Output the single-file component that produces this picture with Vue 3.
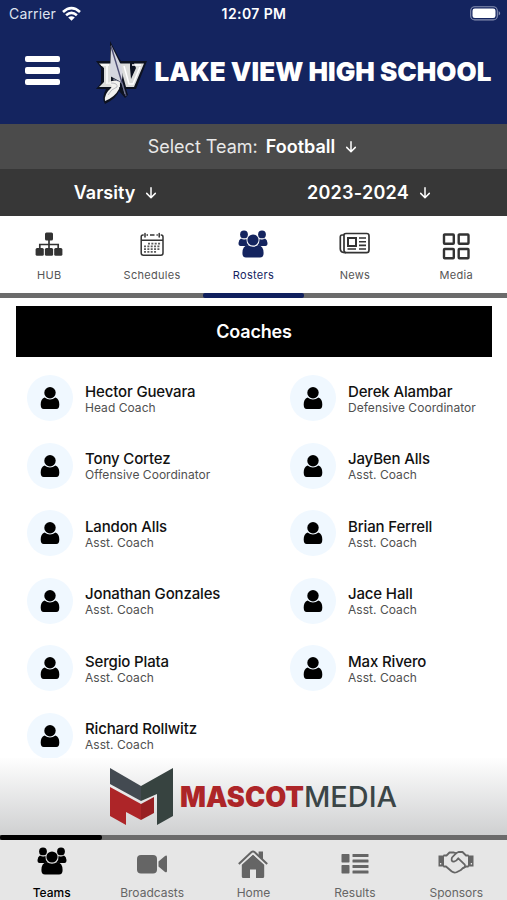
<script setup>
const tabs = [
  { label: 'HUB', icon: 'hub' },
  { label: 'Schedules', icon: 'calendar' },
  { label: 'Rosters', icon: 'people', active: true },
  { label: 'News', icon: 'news' },
  { label: 'Media', icon: 'grid' },
]
const coaches = [
  ['Hector Guevara', 'Head Coach'],
  ['Derek Alambar', 'Defensive Coordinator'],
  ['Tony Cortez', 'Offensive Coordinator'],
  ['JayBen Alls', 'Asst. Coach'],
  ['Landon Alls', 'Asst. Coach'],
  ['Brian Ferrell', 'Asst. Coach'],
  ['Jonathan Gonzales', 'Asst. Coach'],
  ['Jace Hall', 'Asst. Coach'],
  ['Sergio Plata', 'Asst. Coach'],
  ['Max Rivero', 'Asst. Coach'],
  ['Richard Rollwitz', 'Asst. Coach'],
]
const nav = [
  { label: 'Teams', icon: 'people', active: true },
  { label: 'Broadcasts', icon: 'video' },
  { label: 'Home', icon: 'home' },
  { label: 'Results', icon: 'list' },
  { label: 'Sponsors', icon: 'shake' },
]
</script>

<template>
  <svg class="defs" aria-hidden="true">
    <defs>
      <symbol id="people" viewBox="0 0 30 28">
        <g fill="currentColor">
          <circle cx="6" cy="4.4" r="3.9" /><circle cx="24" cy="4.4" r="3.9" />
          <path d="M3 8.5Q6 10.5 8.4 8.7Q8.2 13 10.6 15.2Q9 16 7.5 16H2.6Q.4 16 .5 13Q.7 9.8 3 8.5ZM27 8.5Q24 10.5 21.6 8.7Q21.8 13 19.4 15.2Q21 16 22.5 16H27.4Q29.6 16 29.5 13Q29.3 9.8 27 8.5Z" />
          <circle cx="15" cy="10" r="5.6" />
          <path d="M9.700 15Q15 18.400 20.300 15Q25.600 16 25.600 23Q25.600 27.500 22 27.500H8Q4.400 27.500 4.400 23Q4.400 16 9.700 15Z" />
        </g>
      </symbol>
      <symbol id="hub" viewBox="0 0 30 28">
        <g fill="currentColor">
          <rect x="11" y="2.500" width="8" height="8" rx="1.500" />
          <rect x="1.600" y="18" width="8.200" height="7.800" rx="1.500" />
          <rect x="10.900" y="18" width="8.200" height="7.800" rx="1.500" />
          <rect x="20.200" y="18" width="8.200" height="7.800" rx="1.500" />
        </g>
        <path d="M15 9v10M5.800 19v-4.500h18.400v4.500" fill="none" stroke="currentColor" stroke-width="1.700" />
      </symbol>
      <symbol id="calendar" viewBox="0 0 30 28">
        <g fill="none" stroke="currentColor" stroke-width="1.500">
          <path d="M6.700 5H6Q4.200 5 4.200 7V23Q4.200 25.200 6.300 25.200H24Q26 25.200 26 23V7Q26 5 24.200 5H23.700M9.500 5h1.500M13 5h4.500M19.500 5h1.300M4.200 10.300H26" />
          <path d="M8 3.500v3.500M22.200 3.500v3.500" stroke-linecap="round" />
          <path d="M11 13.700H23.500M7 16.400H23.500M7 19.100H23.500M7 21.800H20" stroke-width="1.700" stroke-dasharray="2 1.350" opacity=".8" />
        </g>
      </symbol>
      <symbol id="news" viewBox="0 0 32 28">
        <g fill="none" stroke="currentColor" stroke-width="1.700">
          <path d="M5 5V20.500Q5 22.700 7 22.700H27.500Q30 22.700 30 20V5.800Q30 3.500 27.700 3.500H7Q5 3.500 5 5Z" />
          <path d="M5 5H3Q1.300 5 1.300 7V19Q1.300 22.700 7 22.700" />
          <rect x="9" y="8" width="8" height="8" stroke-width="2" />
          <path d="M20 8h7M20 11.700h7M20 15.400h7M8.500 19h8.500M20 19h7" stroke-width="1.600" />
        </g>
      </symbol>
      <symbol id="grid" viewBox="0 0 30 32">
        <g fill="none" stroke="currentColor" stroke-width="2.400">
          <rect x="3" y="4.500" width="9.800" height="9.300" rx=".7" /><rect x="17.700" y="4.500" width="9.800" height="9.300" rx=".7" />
          <rect x="3" y="19" width="9.800" height="9.300" rx=".7" /><rect x="17.700" y="19" width="9.800" height="9.300" rx=".7" />
        </g>
      </symbol>
      <symbol id="video" viewBox="0 0 30 28">
        <rect x="0" y="8" width="20" height="18.400" rx="4" fill="currentColor" />
        <path d="M21.500 14.500L28 9Q30 7.700 30 10V24Q30 26 28 25L21.500 19.500Z" fill="currentColor" />
      </symbol>
      <symbol id="home" viewBox="0 0 30 32">
        <path d="M3.800 17.700L15 7.500L26.200 17.700V29.500Q26.200 31 24.700 31H18V22.500H12V31H5.300Q3.800 31 3.800 29.500Z" fill="currentColor" />
        <path d="M20.600 4.500H25V13L20.600 9Z" fill="currentColor" />
        <path d="M1.800 18.300L15 6.400L28.200 18.300" fill="none" stroke="#e6e6e6" stroke-width="1.300" />
        <path d="M.8 17L13.500 5Q15 3.900 16.500 5L29.200 17" fill="none" stroke="currentColor" stroke-width="2" />
      </symbol>
      <symbol id="list" viewBox="0 0 30 28">
        <g fill="currentColor">
          <rect x="1.500" y="7" width="8" height="8.500" rx=".7" /><rect x="1.500" y="18" width="8" height="8.500" rx=".7" />
          <rect x="12.500" y="7" width="16" height="3" rx=".5" /><rect x="12.500" y="12.500" width="16" height="3" rx=".5" />
          <rect x="12.500" y="18" width="16" height="3" rx=".5" /><rect x="12.500" y="23.500" width="16" height="3" rx=".5" />
        </g>
      </symbol>
      <symbol id="shake" viewBox="0 0 36 28">
        <path d="M.5 8.500H6V19.500H.5ZM30 8.500h5.500v11H30Z" fill="currentColor" />
        <path d="M2.600 16v1.500M33.400 16v1.500" stroke="#e6e6e6" stroke-width="1.300" />
        <g fill="none" stroke="currentColor" stroke-width="1.800" stroke-linecap="round" stroke-linejoin="round">
          <path d="M6 8.500H8.500L11.500 5.500H16L18 6.300L20.500 5H24.500L28 8.500H30M6 19.500H8L13.500 24.300Q16 26.300 18.500 25.200L22.500 23.300L25 21L28.300 19.500H30" />
          <path d="M18 6.300L14 10.500Q12.500 14.800 16 14.700Q18.400 14.300 20.300 11.300L26.500 17.300Q28 19.200 25.500 21" />
        </g>
      </symbol>
      <symbol id="arrow" viewBox="0 0 12 13">
        <path d="M6 1.700V11.500M1.700 7.400L6 11.700L10.300 7.400" fill="none" stroke="currentColor" stroke-width="1.500" stroke-linecap="round" stroke-linejoin="round" />
      </symbol>
      <symbol id="person" viewBox="0 0 20 24">
        <circle cx="10" cy="6.700" r="5.700" />
        <path d="M4.500 11.600Q10 15.300 15.500 11.600Q19.300 13 19.300 18.500Q19.300 23 16.300 23H3.700Q.7 23 .7 18.500Q.7 13 4.500 11.600Z" />
      </symbol>
    </defs>
  </svg>

  <div class="screen">
    <header class="top">
      <div class="status">
        <div class="carrier">
          <span>Carrier</span>
          <svg class="wifi" viewBox="0 0 19 14" fill="none" stroke="#fff" stroke-width="2.600">
            <path d="M1 5Q9.500 -2.800 18 5M4.100 8.300Q9.500 3.500 14.900 8.300" />
            <path d="M9.500 13.700L6.200 10.500Q9.500 7.800 12.800 10.500Z" fill="#fff" stroke="none" />
          </svg>
        </div>
        <span class="clock">12:07 PM</span>
        <svg class="battery" viewBox="0 0 31 15">
          <rect x=".7" y=".7" width="26.600" height="13.200" rx="4" fill="none" stroke="#8790b2" stroke-width="1.100" />
          <rect x="2.500" y="2.500" width="23" height="9.600" rx="2.300" fill="#fff" />
          <path d="M28.700 5q3 2.300 0 4.600z" fill="#8790b2" />
        </svg>
      </div>
      <div class="brand">
        <div class="menu"><i /><i /><i /></div>
        <svg class="crest" viewBox="0 0 52 64">
          <path d="M14 0L23 17L25 20H51L40 48H30L32 54L29 57L23 50Q21 57 9 63Q5 57 10 48H0L5 42V27L0 20H14Z" fill="#0d1220" />
          <path d="M3 22.500H15V42H24V46H3L8 41V27ZM23 22.500H34V27L35 38L40 27L38 22.500H48L38 46H30L25 28Z" fill="#dcdddb" />
          <path d="M5 24H13M11 25V43M28 25L33 43H37L44 26M36 24H45" fill="none" stroke="#fff" stroke-width="1.500" />
          <path d="M15 4L25 24Q28 35 25 41L14 35Z" fill="#d5d6df" />
          <path d="M15 5L30 55" fill="none" stroke="#4e4e73" stroke-width="1.400" />
          <path d="M17 38L26 42L29 53" fill="none" stroke="#777d93" stroke-width="1" />
          <path d="M24 41Q17 37 10 43Q18 43 15 47Q8 53 9 60Q19 56 23 48Z" fill="#f1f1ef" />
          <path d="M15 42Q22 42 21 46Q15 48 12 54" fill="none" stroke="#a9acb5" stroke-width=".8" />
        </svg>
        <h1>LAKE VIEW HIGH SCHOOL</h1>
      </div>
    </header>

    <div class="team">
      <span class="lead">Select Team:</span><b>Football</b>
      <svg class="arrow"><use href="#arrow" /></svg>
    </div>
    <div class="filters">
      <div class="level"><b>Varsity</b><svg class="arrow"><use href="#arrow" /></svg></div>
      <div class="year"><b>2023-2024</b><svg class="arrow"><use href="#arrow" /></svg></div>
    </div>

    <nav class="tabs">
      <div v-for="t in tabs" :key="t.label" class="tab" :class="{ active: t.active }">
        <svg :class="t.icon"><use :href="'#' + t.icon" /></svg>
        <span>{{ t.label }}</span>
      </div>
    </nav>
    <div class="rail"><i /></div>

    <main>
      <h2>Coaches</h2>
      <div class="coaches">
        <div v-for="[name, role] in coaches" :key="name" class="coach">
          <div class="avatar"><svg><use href="#person" /></svg></div>
          <div class="info">
            <div class="name">{{ name }}</div>
            <div class="role">{{ role }}</div>
          </div>
        </div>
      </div>
    </main>

    <div class="sponsor">
      <svg viewBox="0 0 290 60">
        <path d="M1 1L32 19V34L1 17Z" fill="#434a51" />
        <path d="M32 19L64 1V49L48 58V27L32 34Z" fill="#374340" />
        <path d="M1 20L32 37V53L17 45V58L1 49Z" fill="#ad2528" />
        <path d="M32 37L45 30V46L32 53Z" fill="#981f22" />
        <text x="71" y="39.500" class="mascot" textLength="124" lengthAdjust="spacingAndGlyphs">MASCOT</text>
        <text x="195" y="39.500" class="media" textLength="93" lengthAdjust="spacingAndGlyphs">MEDIA</text>
      </svg>
    </div>
    <div class="rail bottom"><i /></div>
    <nav class="nav">
      <div v-for="n in nav" :key="n.label" class="item" :class="{ active: n.active }">
        <svg :class="n.icon"><use :href="'#' + n.icon" /></svg>
        <span>{{ n.label }}</span>
      </div>
    </nav>
  </div>
</template>

<style>
body { margin: 0; background: #fff; }
</style>
<style scoped>
* { box-sizing: border-box; }
svg { display: block; overflow: visible; }
.defs { position: absolute; width: 0; height: 0; }
.screen { width: 507px; height: 900px; display: flex; flex-direction: column; overflow: hidden; font-family: Inter, "Liberation Sans", sans-serif; background: #fff; white-space: nowrap; }
.top { height: 124px; flex: none; background: #14245f; color: #fff; }
.status { height: 27px; display: grid; grid-template-columns: 1fr auto 1fr; align-items: center; padding: 0 6px 0 9px; }
.carrier { display: flex; align-items: center; gap: 6px; font-size: 14px; letter-spacing: .15px; color: #dfe3ef; }
.wifi { width: 19px; height: 14px; }
.clock { font-size: 14px; font-weight: 600; letter-spacing: .4px; margin-left: -2px; }
.battery { width: 31px; height: 15px; justify-self: end; }
.brand { height: 90px; display: flex; align-items: center; padding-left: 25px; }
.menu { width: 35px; display: flex; flex-direction: column; gap: 5px; margin-top: -3px; }
.menu i { height: 6.500px; border-radius: 2px; background: #fff; }
.crest { width: 52px; height: 64px; margin-left: 36px; margin-top: 2px; }
h1 { margin: 0 0 0 6.500px; font-size: 26px; line-height: 30px; font-weight: 900; letter-spacing: .03px; width: 338px; }
.team, .level, .year { display: flex; align-items: center; color: #fff; font-size: 18px; }
.team { height: 45px; flex: none; justify-content: center; padding-right: 2px; background: #4b4b4b; }
.lead { color: #e8e8e8; margin-right: 8px; }
b { font-weight: 600; }
.arrow { width: 12px; height: 13px; margin-left: 10px; }
.filters { height: 47px; flex: none; display: grid; grid-template-columns: 231px 1fr; background: #373737; }
.level, .year { justify-content: center; }
.year b { letter-spacing: .25px; }
.tabs { height: 77px; flex: none; display: grid; grid-template-columns: repeat(5, 1fr); padding-top: 14px; background: #fff; }
.tab, .item { display: flex; flex-direction: column; align-items: center; }
.tab { color: #333; font-size: 11px; letter-spacing: .3px; gap: 10px; }
.tab span, .item span { line-height: 14px; }
.tab:first-child { padding-right: 3px; }
.item:first-child { padding-left: 2px; }
.tab span { color: #555; }
.tab.active, .tab.active span { color: #14245f; }
.tab svg { width: 30px; height: 28px; }
.tab svg.news { width: 32px; }
.tab svg.grid { height: 32px; margin-bottom: -4px; }
.rail { height: 5px; flex: none; background: #6b6b6b; }
.rail i { display: block; width: 101px; height: 5px; margin-left: 203px; background: #10205e; border-radius: 2px; }
main { height: 460px; flex: none; padding: 8px 15px 0 16px; overflow: hidden; }
h2 { height: 51px; margin: 0; display: flex; align-items: center; justify-content: center; background: #000; color: #fff; font-size: 18px; font-weight: 600; letter-spacing: -.15px; }
.coaches { display: grid; grid-template-columns: 263px 1fr; grid-auto-rows: 67.500px; padding: 7.500px 0 0 10.500px; }
.coach { display: flex; align-items: center; }
.avatar { width: 46px; height: 46px; border-radius: 50%; background: #f0f8ff; display: flex; align-items: center; justify-content: center; }
.avatar svg { width: 20px; height: 24px; }
.info { margin-left: 12.500px; padding-top: 1px; }
.name { font-size: 15px; line-height: 18px; font-weight: 500; letter-spacing: -.15px; color: #111; }
.role { font-size: 12px; line-height: 14px; letter-spacing: .04px; color: #505050; }
.sponsor { height: 77px; flex: none; display: flex; justify-content: center; padding-top: 9px; background: linear-gradient(#fefefe, #cfd0d1); }
.sponsor svg { width: 290px; height: 60px; }
.mascot { font-size: 28px; font-weight: 900; fill: #ad2528; }
.media { font-size: 28px; font-weight: 500; fill: #3b4546; }
.rail.bottom i { width: 102px; margin-left: 0; background: #000; }
.nav { height: 60px; flex: none; display: grid; grid-template-columns: repeat(5, 1fr); padding-top: 7px; background: #e6e6e6; }
.item { color: #656565; font-size: 12px; gap: 10.500px; }
.item svg { width: 30px; height: 28px; }
.item svg.home { height: 32px; margin-bottom: -4px; }
.item svg.shake { width: 36px; }
.item.active { color: #000; }
.item.active span { font-weight: 500; }
</style>
